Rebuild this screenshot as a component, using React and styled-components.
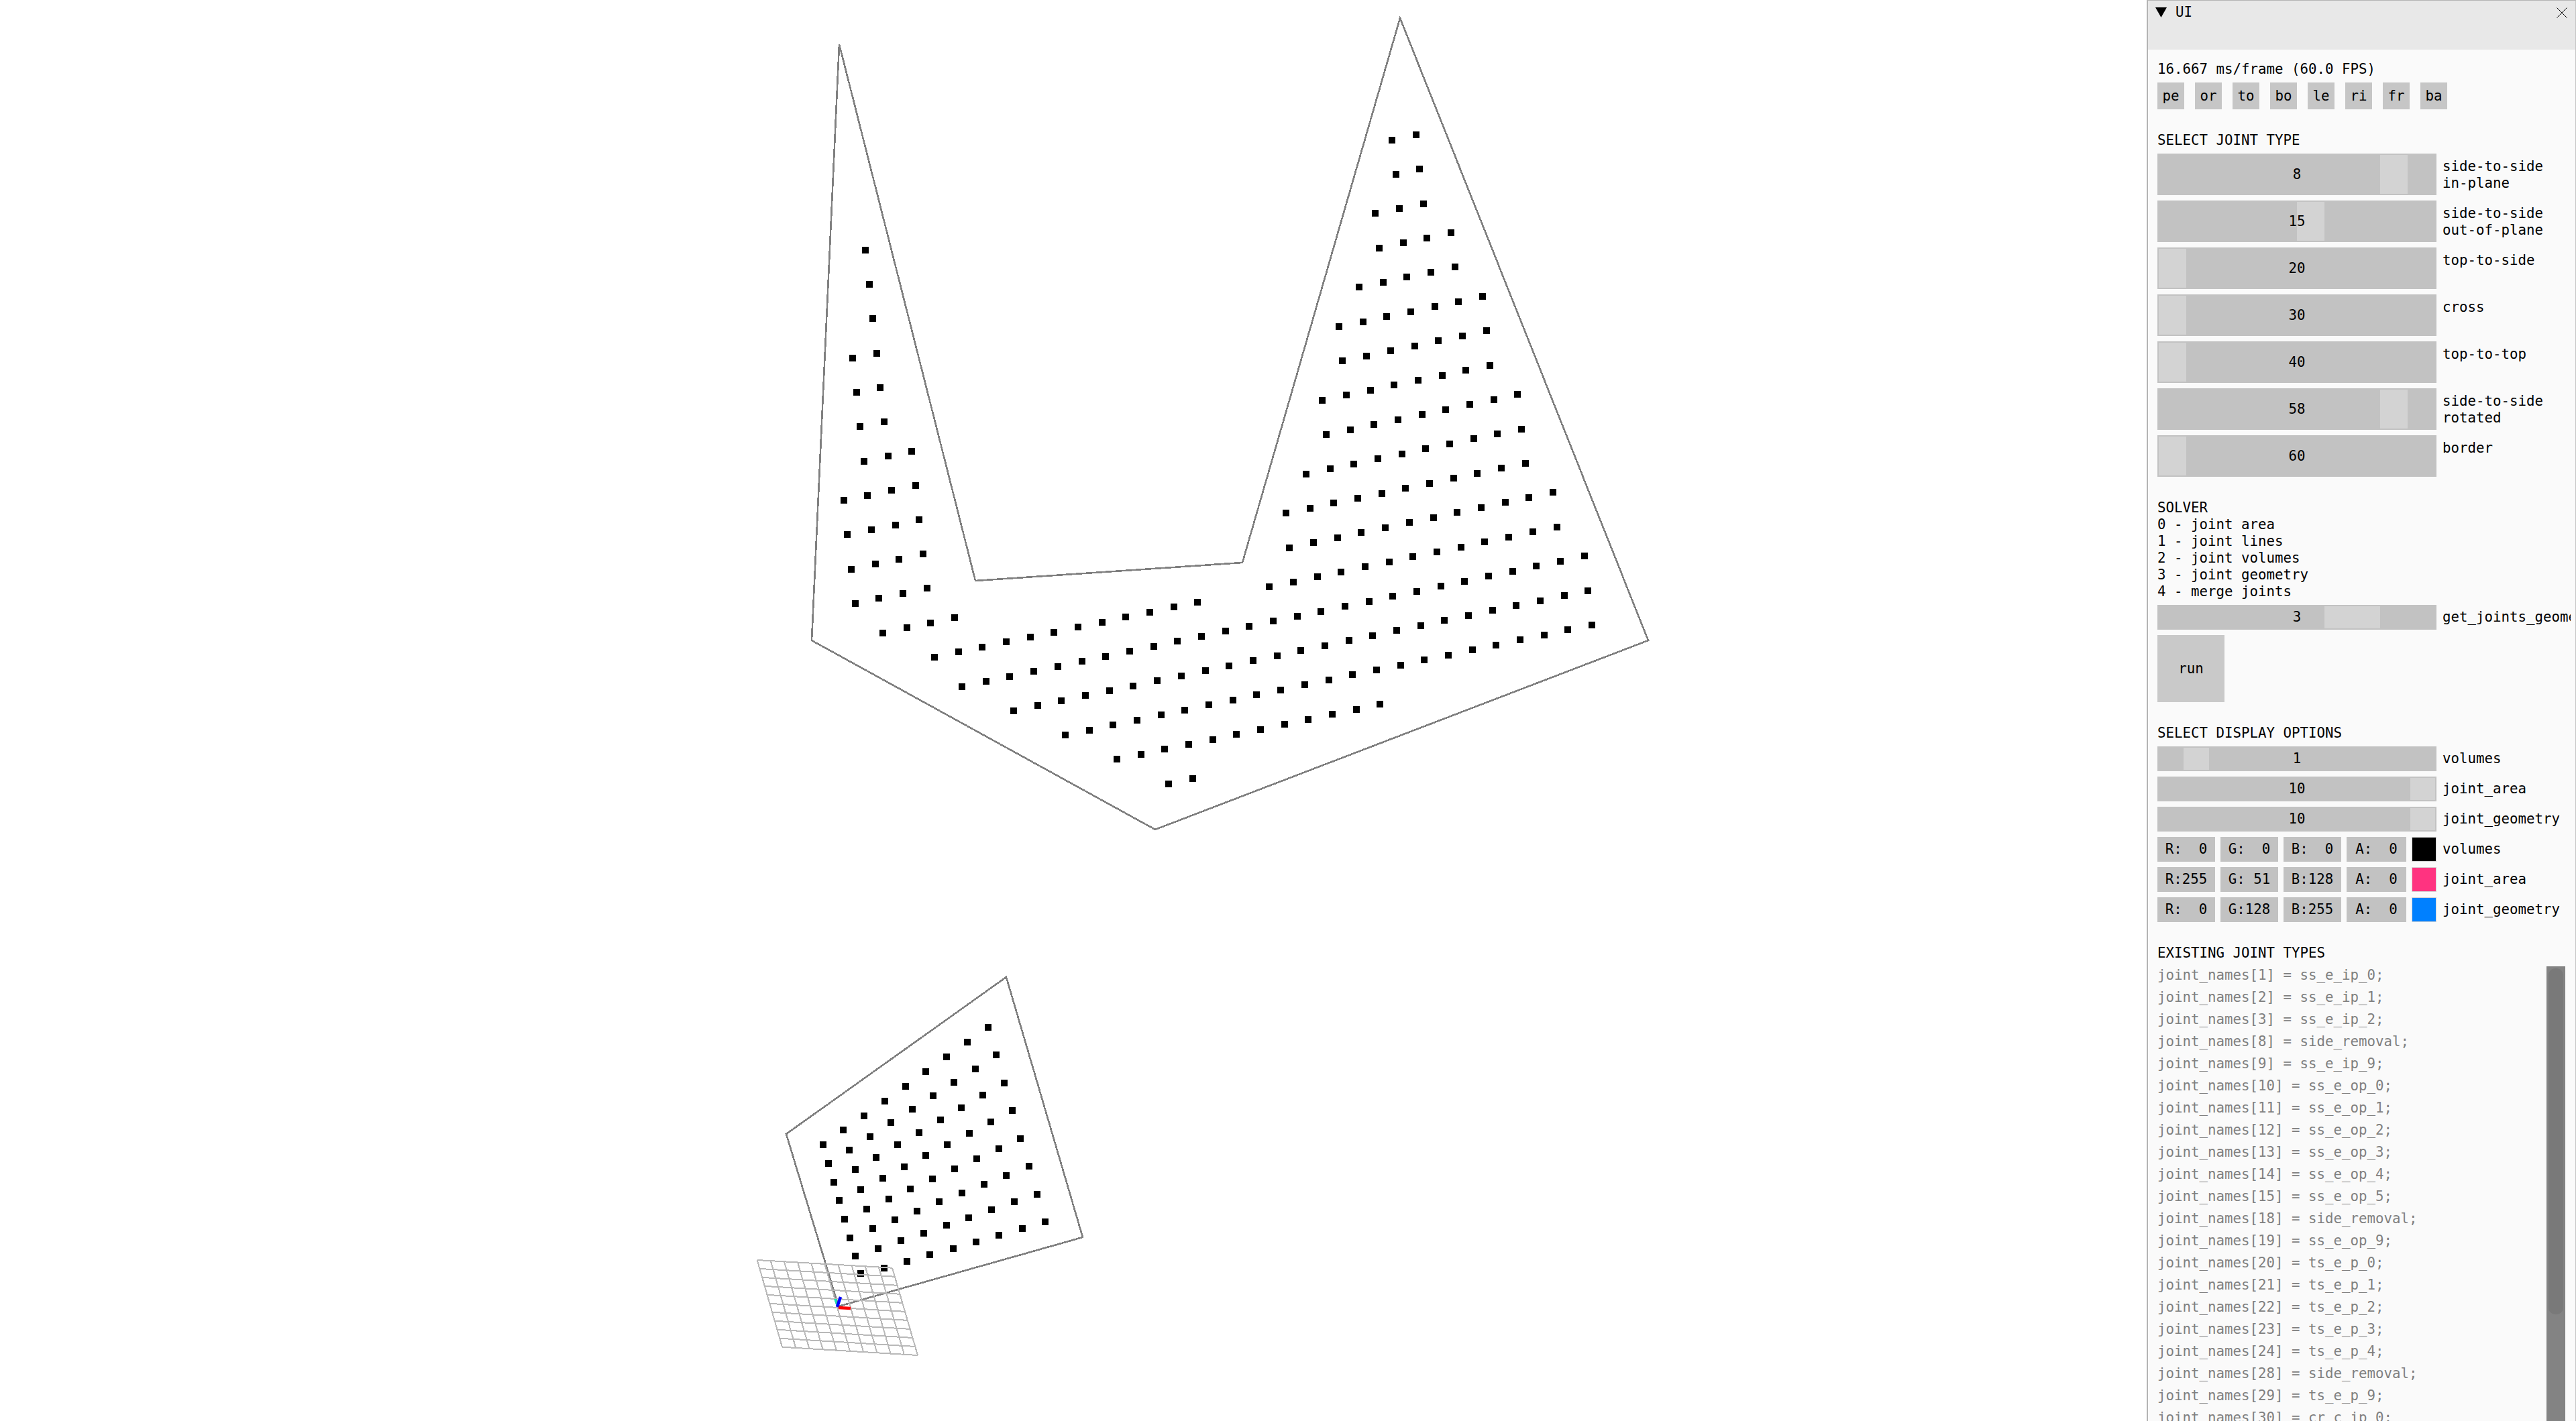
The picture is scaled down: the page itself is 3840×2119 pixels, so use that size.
import React from 'react';
import styled, { createGlobalStyle } from 'styled-components';

const Global = createGlobalStyle`
  html, body { margin: 0; padding: 0; background: #fff; width: 3840px; height: 2119px; overflow: hidden; }
  * { box-sizing: border-box; }
`;

const Page = styled.div`
  display: flex;
  width: 3840px;
  height: 2119px;
  background: #fff;
  overflow: hidden;
  font-family: "DejaVu Sans Mono", "Liberation Mono", monospace;
  font-size: 20.77px;
  line-height: 25px;
  color: #000;
`;
const Viewport = styled.svg`
  display: block;
  flex: none;
  width: 3200px;
  height: 2119px;
`;
const Panel = styled.aside`
  flex: none;
  display: flex;
  flex-direction: column;
  width: 640px;
  height: 2119px;
  background: #fafafa;
  border-left: 2px solid #b4b4b4;
  border-right: 1px solid #c4c4c4;
  border-top: 1px solid #b4b4b4;
`;
const TitleBar = styled.header`
  flex: none;
  display: flex;
  align-items: flex-start;
  height: 73px;
  padding: 5px 12px 0 11px;
  background: #e8e8e8;
`;
const Arrow = styled.svg`
  flex: none;
  width: 17px;
  height: 15px;
  margin: 5px 13px 0 0;
`;
const Title = styled.span`
  flex: 1;
`;
const Close = styled.svg`
  flex: none;
  width: 16px;
  height: 16px;
  margin-top: 5px;
`;
const Body = styled.div`
  flex: 1;
  min-height: 0;
  display: flex;
  flex-direction: column;
  padding: 17px 7px 0 14px;
  overflow: hidden;
`;
const Text = styled.div`
  white-space: pre;
`;
const Buttons = styled.div`
  display: flex;
  gap: 16px;
  margin-top: 7px;
`;
const SmallButton = styled.div`
  width: 40px;
  height: 40px;
  display: flex;
  align-items: center;
  justify-content: center;
  background: #c6c6c6;
`;
const Heading = styled.div`
  margin-top: 34px;
  white-space: pre;
`;
const Stack = styled.div`
  display: flex;
  flex-direction: column;
  gap: 8px;
  margin-top: ${p => p.$top ?? 7}px;
`;
const Row = styled.div`
  display: flex;
  gap: 9px;
  align-items: ${p => (p.$tall ? 'flex-start' : 'center')};
  overflow: hidden;
`;
const Bar = styled.div`
  position: relative;
  flex: none;
  width: 416px;
  height: ${p => (p.$tall ? 62 : 37)}px;
  display: flex;
  align-items: center;
  justify-content: center;
  background: #c2c2c2;
`;
const Grab = styled.div`
  position: absolute;
  top: 2px;
  bottom: 2px;
  left: ${p => p.$left}px;
  width: ${p => p.$width}px;
  background: #d3d3d3;
`;
const Value = styled.span`
  position: relative;
`;
const Label = styled.div`
  flex: none;
  white-space: pre;
  padding-top: ${p => (p.$tall ? 7 : 0)}px;
`;
const RunButton = styled.div`
  width: 100px;
  height: 100px;
  margin-top: 8px;
  display: flex;
  align-items: center;
  justify-content: center;
  background: #c9c9c9;
`;
const Fields = styled.div`
  flex: none;
  display: grid;
  grid-template-columns: 86px 86px 86px 89px 37px;
  gap: 8px;
  width: 416px;
  height: 37px;
`;
const Field = styled.div`
  display: flex;
  align-items: center;
  justify-content: center;
  background: #c2c2c2;
  white-space: pre;
`;
const Swatch = styled.div`
  background: ${p => p.$color};
  border: 1px solid #d4d4d4;
`;
const ListWrap = styled.div`
  flex: 1;
  min-height: 0;
  display: flex;
  margin-top: 7px;
  width: 608px;
  overflow: hidden;
`;
const List = styled.div`
  flex: 1;
  display: flex;
  flex-direction: column;
  gap: 8px;
  padding-top: 1px;
  color: #808080;
  white-space: pre;
`;
const ScrollTrack = styled.div`
  flex: none;
  width: 28px;
  padding: 3px 3px 0;
  background: #838383;
`;
const ScrollGrab = styled.div`
  height: 516px;
  border-radius: 10px;
  background: #797979;
`;

const big = { x: 2074.9, y: 208.6, ux: 35.68, uy: -7.47, vx: 5.6, vy: 51.2 };
const bigRows = [
  [0, 0, 1], [1, 0, 1], [2, -1, 1], [3, -1, 2], [4, -2, 2], [5, -3, 3], [6, -3, 3], [7, -4, 3], [8, -4, 4],
  [9, -5, 4], [10, -6, 4], [11, -6, 5], [12, -7, 5], [13, -20, 6], [14, -18, 6], [15, -16, 6], [16, -14, -3], [17, -12, -11],
  [0, -22, -22], [1, -22, -22], [2, -22, -22], [3, -23, -22], [4, -23, -22], [5, -23, -22], [6, -23, -21],
  [7, -24, -21], [8, -24, -21], [9, -24, -21], [10, -24, -21], [11, -23, -20], [12, -21, -10],
];
const bigDots = bigRows.flatMap(([j, a, b]) => {
  const out = [];
  for (let i = a; i <= b; i++) out.push([big.x + i * big.ux + j * big.vx, big.y + i * big.uy + j * big.vy]);
  return out;
});
const smallRaw = [
  [231,921],[321,855],[414,792],[507,726],[600,660],[690,594],[783,528],[876,462],[969,396],
  [255,1005],[348,945],[441,885],[534,822],[630,762],[723,702],[816,642],[912,582],[1005,519],
  [279,1089],[375,1032],[468,978],[564,921],[660,867],[756,810],[849,756],[945,699],[1041,645],
  [303,1170],[399,1122],[498,1071],[594,1020],[690,969],[786,921],[885,870],[981,819],[1077,768],
  [327,1254],[426,1209],[525,1164],[621,1119],[720,1074],[819,1029],[918,984],[1017,939],[1113,894],
  [351,1338],[453,1296],[552,1257],[651,1218],[750,1176],[852,1137],[951,1098],[1050,1059],[1152,1017],
  [375,1419],[477,1386],[579,1350],[681,1317],[783,1281],[882,1248],[984,1212],[1086,1176],[1188,1143],
  [399,1497],[504,1473],[606,1443],[708,1413],[813,1386],[915,1356],[1017,1326],[1122,1296],[1224,1266],
];
const smallDots = smallRaw.map(([x, y]) => [1150 + x / 3, 1400 + y / 3]);

const corners = { tl: [1128.7, 1879], tr: [1330, 1890.7], br: [1368, 2021], bl: [1166, 2008.7] };
const lerp = (a, b, t) => [a[0] + (b[0] - a[0]) * t, a[1] + (b[1] - a[1]) * t];
const gridLines = [];
for (let k = 0; k <= 10; k++) {
  const t = k / 10;
  gridLines.push([lerp(corners.tl, corners.bl, t), lerp(corners.tr, corners.br, t)]);
  gridLines.push([lerp(corners.tl, corners.tr, t), lerp(corners.bl, corners.br, t)]);
}

const joints = [
  ['1', 'ss_e_ip_0'], ['2', 'ss_e_ip_1'], ['3', 'ss_e_ip_2'], ['8', 'side_removal'], ['9', 'ss_e_ip_9'],
  ['10', 'ss_e_op_0'], ['11', 'ss_e_op_1'], ['12', 'ss_e_op_2'], ['13', 'ss_e_op_3'], ['14', 'ss_e_op_4'],
  ['15', 'ss_e_op_5'], ['18', 'side_removal'], ['19', 'ss_e_op_9'], ['20', 'ts_e_p_0'], ['21', 'ts_e_p_1'],
  ['22', 'ts_e_p_2'], ['23', 'ts_e_p_3'], ['24', 'ts_e_p_4'], ['28', 'side_removal'], ['29', 'ts_e_p_9'],
  ['30', 'cr_c_ip_0'],
];
const jointTypes = [
  { v: '8', left: 332, w: 41, label: 'side-to-side\nin-plane' },
  { v: '15', left: 208, w: 41, label: 'side-to-side\nout-of-plane' },
  { v: '20', left: 2, w: 41, label: 'top-to-side' },
  { v: '30', left: 2, w: 41, label: 'cross' },
  { v: '40', left: 2, w: 41, label: 'top-to-top' },
  { v: '58', left: 332, w: 41, label: 'side-to-side\nrotated' },
  { v: '60', left: 2, w: 41, label: 'border' },
];
const display = [
  { v: '1', left: 39, w: 38, label: 'volumes' },
  { v: '10', left: 377, w: 37, label: 'joint_area' },
  { v: '10', left: 377, w: 37, label: 'joint_geometry' },
];
const colors = [
  { f: ['R:  0', 'G:  0', 'B:  0', 'A:  0'], c: '#000000', label: 'volumes' },
  { f: ['R:255', 'G: 51', 'B:128', 'A:  0'], c: '#ff3380', label: 'joint_area' },
  { f: ['R:  0', 'G:128', 'B:255', 'A:  0'], c: '#0080ff', label: 'joint_geometry' },
];

function Slider({ v, left, w, label, tall }) {
  return (
    <Row $tall={tall}>
      <Bar $tall={tall}>
        <Grab $left={left} $width={w} />
        <Value>{v}</Value>
      </Bar>
      <Label $tall={tall}>{label}</Label>
    </Row>
  );
}

export default function App() {
  return (
    <Page>
      <Global />
      <Viewport viewBox="0 0 3200 2119">
        <g fill="none" stroke="#808080" strokeWidth="2.6" shapeRendering="crispEdges">
          <polygon points="1251,66 1454,866 1852,839 2087,27 2457,955 1722,1237 1210,955" />
          <polygon points="1500,1457 1172,1691 1250,1948 1614,1845" />
        </g>
        <g fill="#000" shapeRendering="crispEdges">
          {bigDots.concat(smallDots).map(([x, y], n) => (
            <rect key={n} x={Math.round(x - 5)} y={Math.round(y - 5)} width="10" height="10" />
          ))}
        </g>
        <g stroke="#b9b9b9" strokeWidth="2" shapeRendering="crispEdges">
          {gridLines.map(([a, b], n) => (
            <line key={n} x1={a[0]} y1={a[1]} x2={b[0]} y2={b[1]} />
          ))}
        </g>
        <polygon points="1243,1937 1248,1937 1247,1948" fill="#20e0b0" />
        <line x1="1248" y1="1949" x2="1253" y2="1934" stroke="#0000ff" strokeWidth="4.5" />
        <line x1="1250" y1="1950" x2="1268" y2="1951" stroke="#ff0000" strokeWidth="4.5" />
      </Viewport>
      <Panel>
        <TitleBar>
          <Arrow viewBox="0 0 17 15"><polygon points="0,0 17,0 8.5,15" fill="#000" /></Arrow>
          <Title>UI</Title>
          <Close viewBox="0 0 16 16"><path d="M0.5 0.5L15.5 15.5M15.5 0.5L0.5 15.5" stroke="#000" strokeWidth="1" fill="none" /></Close>
        </TitleBar>
        <Body>
          <Text>16.667 ms/frame (60.0 FPS)</Text>
          <Buttons>
            {['pe', 'or', 'to', 'bo', 'le', 'ri', 'fr', 'ba'].map(b => <SmallButton key={b}>{b}</SmallButton>)}
          </Buttons>
          <Heading>SELECT JOINT TYPE</Heading>
          <Stack>
            {jointTypes.map(s => <Slider key={s.label} {...s} tall />)}
          </Stack>
          <Heading>SOLVER</Heading>
          <Text>0 - joint area</Text>
          <Text>1 - joint lines</Text>
          <Text>2 - joint volumes</Text>
          <Text>3 - joint geometry</Text>
          <Text>4 - merge joints</Text>
          <Stack>
            <Slider v="3" left={249} w={83} label="get_joints_geometry" />
          </Stack>
          <RunButton>run</RunButton>
          <Heading>SELECT DISPLAY OPTIONS</Heading>
          <Stack>
            {display.map(s => <Slider key={s.label} {...s} />)}
            {colors.map(c => (
              <Row key={c.label}>
                <Fields>
                  {c.f.map(t => <Field key={t}>{t}</Field>)}
                  <Swatch $color={c.c} />
                </Fields>
                <Label>{c.label}</Label>
              </Row>
            ))}
          </Stack>
          <Heading>EXISTING JOINT TYPES</Heading>
          <ListWrap>
            <List>
              {joints.map(([n, name]) => <div key={n}>{`joint_names[${n}] = ${name};`}</div>)}
            </List>
            <ScrollTrack><ScrollGrab /></ScrollTrack>
          </ListWrap>
        </Body>
      </Panel>
    </Page>
  );
}
